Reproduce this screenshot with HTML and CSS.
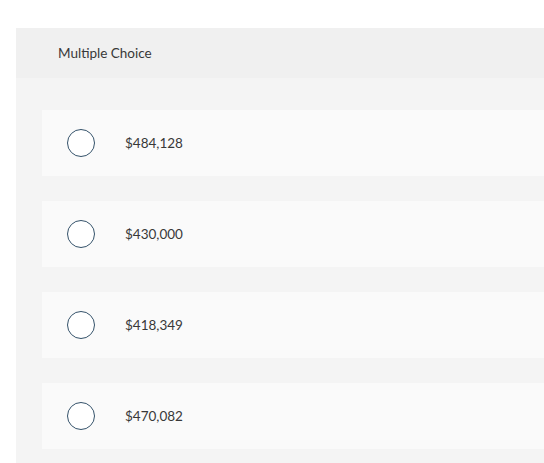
FILE: index.html
```html
<!DOCTYPE html>
<html>
<head>
<meta charset="utf-8">
<link rel="stylesheet" href="styles.css">
</head>
<body>
<div class="question">
  <div class="header">Multiple Choice</div>
  <div class="choices">
    <div class="choice"><span class="radio"></span><span class="label">$484,128</span></div>
    <div class="choice"><span class="radio"></span><span class="label">$430,000</span></div>
    <div class="choice"><span class="radio"></span><span class="label">$418,349</span></div>
    <div class="choice"><span class="radio"></span><span class="label">$470,082</span></div>
  </div>
</div>
</body>
</html>
```
FILE: styles.css
```css
html, body {
  margin: 0;
  padding: 0;
  background: #ffffff;
  overflow: hidden;
}
body {
  font-family: "Lato", "Open Sans", sans-serif;
  color: #333333;
}
.question {
  margin-top: 28px;
  margin-left: 16px;
}
.header {
  height: 50px;
  background: #f0f0f0;
  display: flex;
  align-items: center;
  padding-left: 42px;
  font-size: 13.5px;
  color: #383838;
}
.choices {
  background: #f4f4f4;
  padding: 32px 0 20px 26px;
  display: flex;
  flex-direction: column;
  gap: 25px;
}
.choice {
  height: 66px;
  background: #fafafa;
  display: flex;
  align-items: center;
  padding-left: 25px;
}
.radio {
  width: 26px;
  height: 26px;
  border: 1.5px solid #34526a;
  border-radius: 50%;
  background: #fff;
  flex: none;
}
.label {
  margin-left: 30px;
  font-size: 13.5px;
  color: #383838;
}
```
